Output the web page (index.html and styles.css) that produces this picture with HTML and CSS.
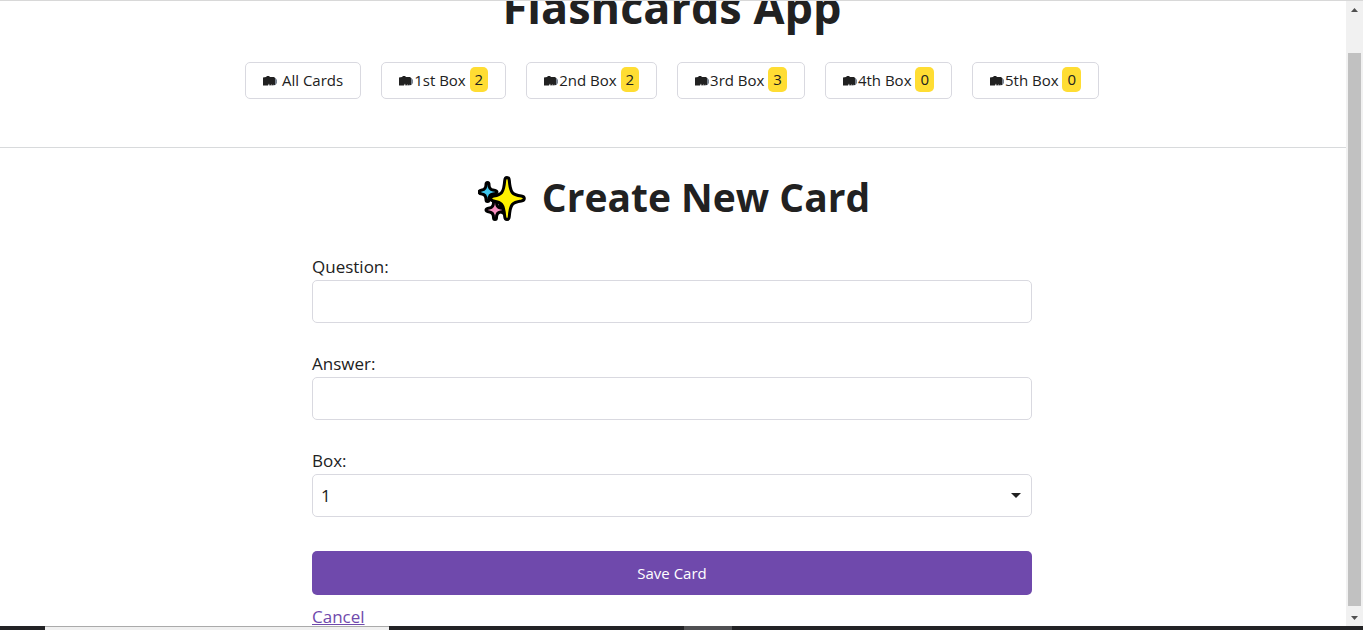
FILE: index.html
```html
<!DOCTYPE html>
<html lang="en">
<head>
<meta charset="utf-8">
<title>Flashcards App</title>
<link rel="stylesheet" href="styles.css">
</head>
<body>
<svg class="defs" aria-hidden="true">
  <symbol id="cards" viewBox="0 0 14 10">
    <path d="M10 1.500 12.500 2 14 4v3l-1.500 2L10 9.500z" fill="#7a8491"/>
    <path d="M0 1.500 3 1 4 0h2l1 1h4l1 1V9h-1.500V8L9.500 9.500H8.500V8L7.500 9.500H6.500L6 7.500 5 9.500H0z" fill="#212121"/>
  </symbol>
</svg>
<div class="window">
  <div class="view">
    <div class="page">
      <header class="header">
        <h1 class="title">Flashcards App</h1>
        <nav class="nav">
          <a class="tab" href="#"><svg class="icon"><use href="#cards"/></svg><span class="all">All Cards</span></a>
          <a class="tab" href="#"><svg class="icon"><use href="#cards"/></svg>1st Box <mark class="count">2</mark></a>
          <a class="tab" href="#"><svg class="icon"><use href="#cards"/></svg>2nd Box <mark class="count">2</mark></a>
          <a class="tab" href="#"><svg class="icon"><use href="#cards"/></svg>3rd Box <mark class="count">3</mark></a>
          <a class="tab" href="#"><svg class="icon"><use href="#cards"/></svg>4th Box <mark class="count">0</mark></a>
          <a class="tab" href="#"><svg class="icon"><use href="#cards"/></svg>5th Box <mark class="count">0</mark></a>
        </nav>
      </header>
      <main class="main">
        <h2 class="title heading">
          <svg class="sparkles" viewBox="0 0 48 48" aria-hidden="true">
            <g stroke="#000" stroke-width="3" stroke-linejoin="round">
              <path d="M22 26 29 32 28 40 22 36z" fill="#000"/>
              <path d="M9.500 7.500q1.500 0 1.500 2 0 5 4 5.500 4 .5 4 2t-4 2q-4 .5-4 5.500 0 2-1.500 2t-1.500-2q0-5-4-5.500-3-.5-3-2t3-2q4-.5 4-5.500 0-2 1.500-2z" fill="#3fc6ee"/>
              <path d="M17 25.500q1.500 0 1.500 2 0 5 4 5.500 3.500.5 3.500 2t-3.500 2q-4 .5-4 5.500 0 2-1.500 2t-1.500-2q0-5-4-5.500-3.500-.5-3.500-2t3.500-2q4-.5 4-5.500 0-2 1.500-2z" fill="#f78fc0"/>
              <path d="M29 2.500q2 0 2.300 3 .7 9 3 12 2 2.500 9 3.500 3 .5 3 2.500t-3 2.500q-7 1-9 3.500-2.300 3-3 12-.3 3-2.300 3t-2.300-3q-.7-9-3-12-2-2.500-8-3.500-3-.5-3-2.500t3-2.500q6-1 8-3.500 2.300-3 3-12 .3-3 2.300-3z" fill="#fff200"/>
            </g>
          </svg>
          Create New Card
        </h2>
        <form class="form">
          <div class="field">
            <label for="question">Question:</label>
            <input class="control" id="question" type="text">
          </div>
          <div class="field">
            <label for="answer">Answer:</label>
            <input class="control" id="answer" type="text">
          </div>
          <div class="field">
            <label for="box">Box:</label>
            <div class="select">
              <select class="control" id="box"><option>1</option><option>2</option><option>3</option><option>4</option><option>5</option></select>
              <svg class="arrow" viewBox="0 0 10 5" aria-hidden="true"><path d="M0 0h10L5 5z" fill="#212121"/></svg>
            </div>
          </div>
          <button class="save" type="button">Save Card</button>
        </form>
        <div class="actions"><a class="cancel" href="#">Cancel</a></div>
      </main>
    </div>
    <div class="scrollbar" aria-hidden="true">
      <svg class="step" viewBox="0 0 7 4"><path d="M0 4h7L3.500 0z" fill="#505050"/></svg>
      <div class="thumb"></div>
      <svg class="step" viewBox="0 0 7 4"><path d="M0 0h7L3.500 4z" fill="#505050"/></svg>
    </div>
  </div>
  <div class="taskbar" aria-hidden="true"><span class="start"></span><span class="search"></span><span class="gap"></span><span class="active"></span></div>
</div>
</body>
</html>
```
FILE: styles.css
```css
* { box-sizing: border-box; }

body {
  margin: 0;
  background: #fff;
  color: #212121;
  font: 400 17px/24px "Open Sans", "Noto Sans", sans-serif;
}

.defs { position: absolute; width: 0; height: 0; }

.window { display: flex; flex-direction: column; height: 100vh; }

.view {
  display: flex;
  flex: 1;
  min-height: 0;
  overflow: hidden;
  border-top: 1px solid #d8d8d8;
}

.page { flex: 1; margin-top: -24px; }

.header {
  padding: 0 2px 48px 0;
  border-bottom: 1px solid #d8dadc;
}

.title {
  margin: 0;
  text-align: center;
  font-size: 45px;
  line-height: 60px;
  font-weight: 700;
}

.nav { display: flex; justify-content: center; gap: 20px; margin-top: 25px; }

.tab {
  display: flex;
  align-items: center;
  height: 37px;
  padding: 0 17px 2px 16px;
  border: 1px solid #d9d9e0;
  border-radius: 5px;
  color: inherit;
  font-size: 15px;
  text-decoration: none;
  white-space: pre;
}

.icon { width: 14px; height: 10px; margin: 3px 1px 0 1px; }
.all { margin-left: 4px; }

.count {
  padding: 0 5px;
  border-radius: 5px;
  background: #ffdd33;
  color: inherit;
  line-height: 25px;
}

.main { padding: 20px 2px 0 0; }

.heading {
  display: flex;
  align-items: center;
  justify-content: center;
  gap: 16px;
  padding-left: 4px;
  font-size: 39px;
  line-height: 58px;
}

.sparkles { width: 48px; height: 48px; margin-top: 3px; }

.form, .actions { max-width: 720px; margin: 0 auto; }

.form { padding-top: 29px; }

.field { margin-bottom: 29px; }

.field label { display: block; height: 25px; }

.control {
  display: block;
  width: 100%;
  height: 43px;
  padding: 0 8px;
  border: 1px solid #d9d9e0;
  border-radius: 5px;
  background: #fff;
  color: inherit;
  font: inherit;
  appearance: none;
}

.select { position: relative; }

.arrow { position: absolute; right: 11px; top: 19px; width: 10px; height: 5px; }

.save {
  display: block;
  width: 100%;
  height: 44px;
  margin-top: 34px;
  border: 0;
  border-radius: 5px;
  background: #6f49ac;
  color: #fff;
  font: 400 15px/24px "Open Sans", "Noto Sans", sans-serif;
}

.actions { padding-top: 10px; }
.cancel { color: #6f49ac; }

.scrollbar {
  display: flex;
  flex-direction: column;
  align-items: center;
  width: 17px;
  padding: 7px 0 6px;
  background: #f1f1f1;
}

.step { width: 7px; height: 4px; }

.thumb { flex: 1; width: 13px; margin: 41px 0 10px; background: #c1c1c1; }

.taskbar { display: flex; height: 4px; background: #232325; }
.start { width: 45px; }
.search { width: 344px; background: #f0f0f0; border-top: 1px solid #aaa; }
.gap { width: 295px; }
.active { width: 48px; background: #505052; }
```
